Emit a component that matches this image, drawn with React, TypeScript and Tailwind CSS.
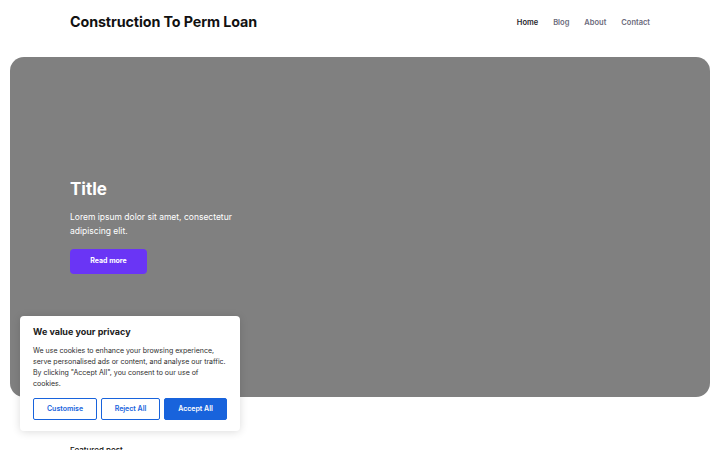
import React from "react";

export default function App() {
  return (
    <div className="relative min-h-[450px] bg-white text-[#1a1a1a]" style={{ fontFamily: "Inter, 'Noto Sans', sans-serif" }}>
      <header className="flex h-[44px] items-center justify-between px-[70px]">
        <div className="text-[14.3px] font-bold tracking-[-0.1px] text-[#111]">Construction To Perm Loan</div>
        <nav className="flex items-center gap-[15px] pt-[2px] text-[7.5px] font-semibold text-[#6b6b7b]">
          <span className="text-[#1e1e2a]">Home</span>
          <span>Blog</span>
          <span>About</span>
          <span>Contact</span>
        </nav>
      </header>
      <section className="mx-[10px] mt-[13px] flex h-[340px] flex-col justify-center rounded-[14px] bg-[#808080] px-[60px] pb-[2px]">
        <h1 className="text-[17px] font-bold leading-[20px] text-white">Title</h1>
        <p className="mt-[11px] w-[170px] text-[8.5px] leading-[14px] text-white">
          Lorem ipsum dolor sit amet, consectetur adipiscing elit.
        </p>
        <button className="mt-[11px] flex h-[25px] w-[77px] items-center justify-center rounded-[4px] bg-[#6a35f5] text-[7px] font-bold text-white">
          Read more
        </button>
      </section>
      <div className="mt-[47px] px-[70px] text-[8px] font-medium text-[#111]">Featured post</div>

      <div className="absolute left-[20px] top-[316px] w-[220px] rounded-[4px] bg-white px-[13px] pb-[11px] pt-[10px] shadow-[0_1px_8px_rgba(0,0,0,0.14)]">
        <div className="text-[9px] font-bold leading-[12px] text-[#212121]">We value your privacy</div>
        <p className="mt-[7px] text-[7px] leading-[11px] text-[#2e2e2e]">
          We use cookies to enhance your browsing experience, serve personalised ads or content, and analyse our traffic. By clicking "Accept All", you consent to our use of cookies.
        </p>
        <div className="mt-[9px] flex gap-[4px]">
          <button className="flex h-[22px] w-[64px] items-center justify-center rounded-[2px] border-[1.5px] border-[#1863dc] bg-white text-[7px] font-semibold text-[#1863dc]">Customise</button>
          <button className="flex h-[22px] w-[59px] items-center justify-center rounded-[2px] border-[1.5px] border-[#1863dc] bg-white text-[7px] font-semibold text-[#1863dc]">Reject All</button>
          <button className="flex h-[22px] w-[63px] items-center justify-center rounded-[2px] border-[1.5px] border-[#1863dc] bg-[#1863dc] text-[7px] font-semibold text-white">Accept All</button>
        </div>
      </div>
    </div>
  );
}
